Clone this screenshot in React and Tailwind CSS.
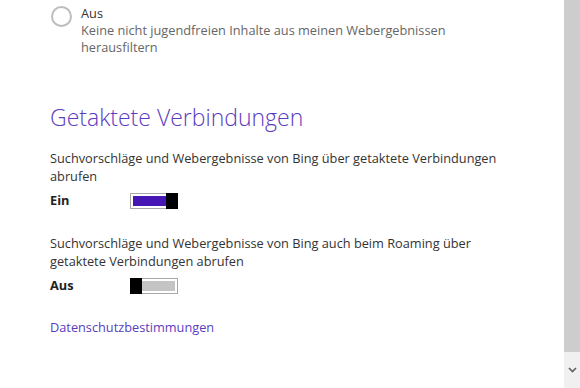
import React from "react";

const font = { fontFamily: '"Open Sans", "Noto Sans", sans-serif' };

const Toggle = ({ on }) => (
  <div className="w-[48px] h-[16px] border border-[#a8a8a8] bg-white p-[2px] flex relative">
    <div className={on ? "flex-1 bg-[#4617b4]" : "flex-1 bg-[#c4c4c4]"} />
    <div
      className={
        on
          ? "absolute right-[-1px] top-[-1px] w-[12px] h-[16px] bg-black"
          : "absolute left-[-1px] top-[-1px] w-[12px] h-[16px] bg-black"
      }
    />
  </div>
);

const Setting = ({ text, label, on }) => (
  <div className="flex flex-col">
    <p className="text-[12.75px] leading-[18px] text-[#333] w-[470px]">{text}</p>
    <div className="flex items-center mt-[6px]">
      <span className="w-[80px] text-[12.75px] font-bold text-[#222]">{label}</span>
      <Toggle on={on} />
    </div>
  </div>
);

export default function App() {
  return (
    <div className="w-[580px] h-[388px] bg-white flex overflow-hidden" style={font}>
      <div className="flex-1 pl-[50px] pt-[4px]">
        <div className="flex items-start gap-[9px]">
          <div className="w-[21px] h-[21px] rounded-full border-2 border-[#bdbdbd] mt-[2px] ml-[1px] shrink-0" />
          <div className="flex flex-col">
            <span className="text-[12.75px] leading-[18px] text-[#333]">Aus</span>
            <span className="text-[12.75px] leading-[17px] text-[#666] w-[410px]">
              Keine nicht jugendfreien Inhalte aus meinen Webergebnissen herausfiltern
            </span>
          </div>
        </div>

        <h2 className="mt-[46px] text-[23px] font-light leading-[30px] text-[#5a3cc0]">
          Getaktete Verbindungen
        </h2>

        <div className="mt-[17px] flex flex-col gap-[24px]">
          <Setting
            text="Suchvorschläge und Webergebnisse von Bing über getaktete Verbindungen abrufen"
            label="Ein"
            on
          />
          <Setting
            text="Suchvorschläge und Webergebnisse von Bing auch beim Roaming über getaktete Verbindungen abrufen"
            label="Aus"
            on={false}
          />
        </div>

        <a className="block mt-[23px] text-[12.75px] text-[#5a3cc0]">Datenschutzbestimmungen</a>
      </div>

      <div className="w-[16px] h-full flex flex-col">
        <div className="flex-1 bg-[#cdcdcd]" />
        <div className="h-[36px] bg-[#f0f0f0] flex items-center justify-center">
          <svg width="9" height="6" viewBox="0 0 9 6">
            <path d="M1 1 L4.5 4.5 L8 1" fill="none" stroke="#606060" strokeWidth="1.6" />
          </svg>
        </div>
      </div>
    </div>
  );
}
